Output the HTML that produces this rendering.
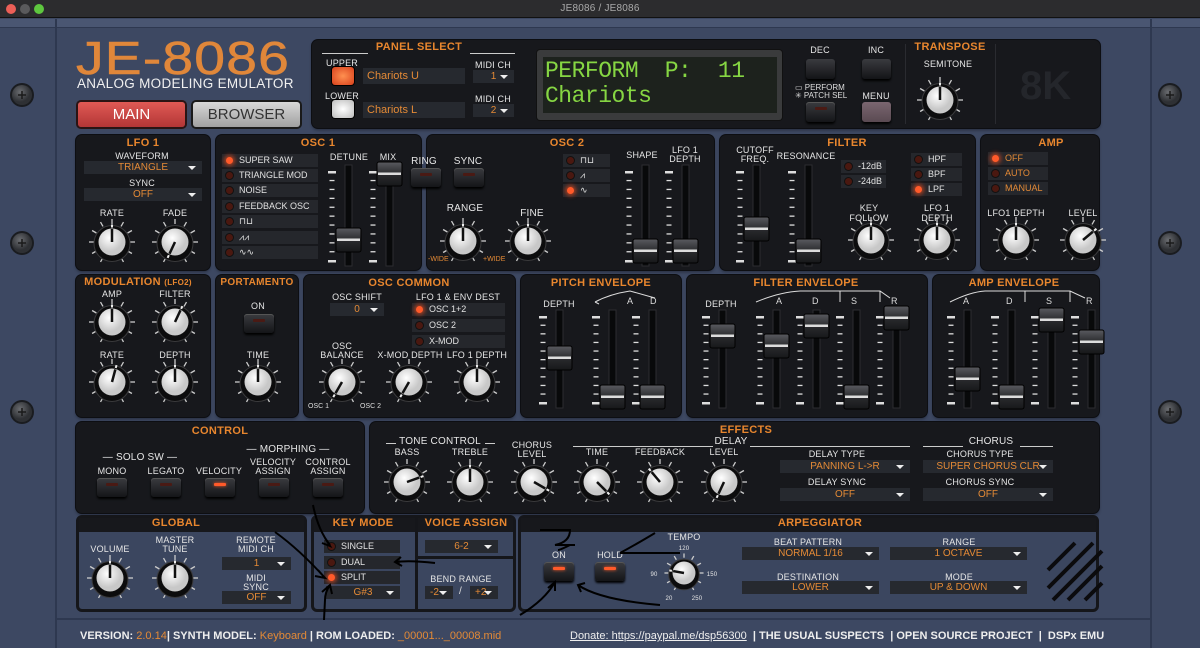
<!DOCTYPE html>
<html><head><meta charset="utf-8">
<style>
*{box-sizing:border-box;margin:0;padding:0}
body{width:1200px;height:648px;overflow:hidden;background:#3d4862;font-family:"Liberation Sans",sans-serif;position:relative;color:#ddd}
.a{position:absolute}
.t{position:absolute;transform:translateX(-50%);white-space:nowrap;text-align:center;font-size:9px;line-height:10px;color:#e6e6e6;letter-spacing:0.2px}
.h{position:absolute;transform:translateX(-50%);white-space:nowrap;font-size:11px;font-weight:bold;color:#e8862e;letter-spacing:0.3px}
.sec{position:absolute;background:#17181c;border-radius:6px;box-shadow:0 0 0 1px #0d0e12,0 2px 3px rgba(0,0,0,.4)}
.bsec{position:absolute;background:#3b465f;border:3px solid #15161a;border-radius:6px}
.dd{position:absolute;background:#26292f;height:13px;font-size:10px;line-height:13px;color:#e48a36;text-align:center}
.dd:after{content:"";position:absolute;right:6px;top:5px;border-left:4px solid transparent;border-right:4px solid transparent;border-top:4px solid #eee}
.led{position:absolute;background:#25272c;height:13px;font-size:9px;line-height:13px;color:#e2e2e2;padding-left:17px}
.led:before{content:"";position:absolute;left:4px;top:3px;width:7px;height:7px;border-radius:50%;background:#4a1810;box-shadow:0 0 0 1px #111}
.led.on:before{background:#ff5a2a;box-shadow:0 0 4px 2px rgba(255,80,30,.6)}
.led.o{color:#e48a36}
.btn{position:absolute;width:30px;height:19px;border-radius:3px;background:linear-gradient(#3a3b3f,#141518);box-shadow:0 2px 2px #000,inset 0 1px 0 #555}
.btn:after{content:"";position:absolute;left:9px;top:5px;width:12px;height:3px;background:#4a1a14;border-radius:1px}
.btn.on:after{background:#ff5a2a;box-shadow:0 0 3px #f52}
.ln{position:absolute;height:1px;background:#ccc}
</style></head><body>
<div class="a" style="left:0;top:0;width:1200px;height:18px;background:#2c2c2e;border-bottom:1px solid #111"></div>
<div class="a" style="left:6px;top:4px;width:10px;height:10px;border-radius:50%;background:#ec5f57"></div>
<div class="a" style="left:20px;top:4px;width:10px;height:10px;border-radius:50%;background:#5a5a5c"></div>
<div class="a" style="left:34px;top:4px;width:10px;height:10px;border-radius:50%;background:#5ec73f"></div>
<div class="t" style="left:600px;top:4px;color:#aaa;font-size:10px">JE8086 / JE8086</div>
<div class="a" style="left:0;top:19px;width:1200px;height:9px;background:#4a5672;border-bottom:1px solid #2e3850"></div>
<div class="a" style="left:55px;top:19px;width:2px;height:629px;background:#2e3850"></div>
<div class="a" style="left:1150px;top:19px;width:2px;height:629px;background:#2e3850"></div>
<div class="a" style="left:57px;top:618px;width:1093px;height:2px;background:#2e3850"></div>
<!-- logo -->
<div class="a" style="left:76px;top:31px;font-size:46px;color:#e0873a;letter-spacing:1px;transform:scaleX(1.2);transform-origin:left;-webkit-text-stroke:0.6px #e0873a">JE-8086</div>
<div class="a" style="left:77px;top:76px;font-size:13.5px;color:#f0f0f0;letter-spacing:0.3px">ANALOG MODELING EMULATOR</div>
<div class="a" style="left:78px;top:102px;width:107px;height:25px;border-radius:3px;background:linear-gradient(#e05a55,#b33636);box-shadow:0 0 0 2px #2a1414;color:#fff;font-size:15px;text-align:center;line-height:25px">MAIN</div>
<div class="a" style="left:193px;top:102px;width:107px;height:25px;border-radius:3px;background:linear-gradient(#d8d8d8,#a0a0a0);box-shadow:0 0 0 2px #1a1a1a;color:#333;font-size:15px;text-align:center;line-height:25px">BROWSER</div>
<!-- top panel -->
<div class="sec" style="left:312px;top:40px;width:788px;height:88px"></div>
<div class="ln" style="left:322px;top:53px;width:46px"></div><div class="ln" style="left:470px;top:53px;width:45px"></div>
<div class="h" style="left:419px;top:41px">PANEL SELECT</div>
<div class="t" style="left:342px;top:58px">UPPER</div>
<div class="a" style="left:332px;top:67px;width:22px;height:18px;border-radius:3px;background:radial-gradient(#ff9050,#d8401c);box-shadow:0 0 0 1px #000"></div>
<div class="a" style="left:363px;top:68px;width:102px;height:16px;background:#26292f;color:#e48a36;font-size:11px;line-height:16px;padding-left:4px">Chariots U</div>
<div class="t" style="left:493px;top:60px">MIDI CH</div>
<div class="dd" style="left:473px;top:70px;width:41px">1</div>
<div class="t" style="left:342px;top:91px">LOWER</div>
<div class="a" style="left:332px;top:100px;width:22px;height:18px;border-radius:3px;background:radial-gradient(#fff,#bbb);box-shadow:0 0 0 1px #000"></div>
<div class="a" style="left:363px;top:102px;width:102px;height:16px;background:#26292f;color:#e48a36;font-size:11px;line-height:16px;padding-left:4px">Chariots L</div>
<div class="t" style="left:493px;top:94px">MIDI CH</div>
<div class="dd" style="left:473px;top:104px;width:41px">2</div>
<div class="a" style="left:537px;top:50px;width:245px;height:70px;background:#3a3b3c;border-radius:3px;box-shadow:0 0 0 1px #111"></div>
<div class="a" style="left:543px;top:57px;width:234px;height:56px;background:#1d221d;color:#86d643;font-family:'Liberation Mono',monospace;font-size:23px;line-height:25px;padding:2px 0 0 2px;white-space:pre;letter-spacing:-0.5px">PERFORM  P:  11
Chariots</div>
<div class="t" style="left:820px;top:45px">DEC</div><div class="t" style="left:876px;top:45px">INC</div>
<div class="a" style="left:806px;top:59px;width:29px;height:20px;border-radius:3px;background:linear-gradient(#3a3b3f,#131417);box-shadow:0 2px 2px #000"></div>
<div class="a" style="left:862px;top:59px;width:29px;height:20px;border-radius:3px;background:linear-gradient(#3a3b3f,#131417);box-shadow:0 2px 2px #000"></div>
<div class="a" style="left:795px;top:84px;font-size:8px;line-height:8px;color:#ddd">▭ PERFORM<br>✳ PATCH SEL</div>
<div class="t" style="left:876px;top:91px">MENU</div>
<div class="btn" style="left:806px;top:102px;width:29px;height:20px"></div>
<div class="a" style="left:862px;top:102px;width:29px;height:20px;border-radius:3px;background:linear-gradient(#7a6670,#5a4a52);box-shadow:0 2px 2px #000"></div>
<div class="a" style="left:905px;top:44px;width:1px;height:80px;background:#2a2b30"></div>
<div class="a" style="left:995px;top:44px;width:1px;height:80px;background:#2a2b30"></div>
<div class="h" style="left:950px;top:41px">TRANSPOSE</div>
<div class="t" style="left:948px;top:59px">SEMITONE</div>
<div class="a" style="left:1020px;top:64px;font-size:40px;font-weight:bold;color:#24262b">8K</div>

<div class="sec" style="left:76px;top:135px;width:134px;height:135px"></div>
<div class="h" style="left:143px;top:137px">LFO 1</div>
<div class="t" style="left:142px;top:151px">WAVEFORM</div>
<div class="dd" style="left:84px;top:161px;width:118px">TRIANGLE</div>
<div class="t" style="left:142px;top:178px">SYNC</div>
<div class="dd" style="left:84px;top:188px;width:118px">OFF</div>
<div class="t" style="left:112px;top:208px">RATE</div><div class="t" style="left:175px;top:208px">FADE</div>

<div class="sec" style="left:216px;top:135px;width:205px;height:135px"></div>
<div class="h" style="left:318px;top:137px">OSC 1</div>
<div class="led on" style="left:222px;top:154px;width:96px">SUPER SAW</div>
<div class="led" style="left:222px;top:169px;width:96px">TRIANGLE MOD</div>
<div class="led" style="left:222px;top:184px;width:96px">NOISE</div>
<div class="led" style="left:222px;top:200px;width:96px">FEEDBACK OSC</div>
<div class="led" style="left:222px;top:215px;width:96px">⊓⊔</div>
<div class="led" style="left:222px;top:231px;width:96px">⩘⩘</div>
<div class="led" style="left:222px;top:246px;width:96px">∿∿</div>
<div class="t" style="left:349px;top:152px">DETUNE</div><div class="t" style="left:388px;top:152px">MIX</div>

<div class="sec" style="left:427px;top:135px;width:287px;height:135px"></div>
<div class="h" style="left:567px;top:137px">OSC 2</div>
<div class="t" style="left:424px;top:157px;font-size:10px">RING</div><div class="t" style="left:468px;top:157px;font-size:10px">SYNC</div>
<div class="btn" style="left:411px;top:168px"></div><div class="btn" style="left:454px;top:168px"></div>
<div class="led" style="left:563px;top:154px;width:47px">⊓⊔</div>
<div class="led" style="left:563px;top:169px;width:47px">⩘</div>
<div class="led on" style="left:563px;top:184px;width:47px">∿</div>
<div class="t" style="left:465px;top:204px;font-size:10px">RANGE</div>
<div class="t" style="left:532px;top:209px;font-size:10px">FINE</div>
<div class="t" style="left:642px;top:150px">SHAPE</div><div class="t" style="left:685px;top:146px;line-height:9px">LFO 1<br>DEPTH</div>
<div class="a" style="left:428px;top:256px;font-size:7px;color:#e48a36">-WIDE</div><div class="a" style="left:483px;top:256px;font-size:7px;color:#e48a36">+WIDE</div>

<div class="sec" style="left:720px;top:135px;width:255px;height:135px"></div>
<div class="h" style="left:847px;top:137px">FILTER</div>
<div class="t" style="left:755px;top:146px;line-height:9px">CUTOFF<br>FREQ.</div><div class="t" style="left:806px;top:151px">RESONANCE</div>
<div class="led" style="left:841px;top:160px;width:45px">-12dB</div>
<div class="led" style="left:841px;top:175px;width:45px">-24dB</div>
<div class="led" style="left:911px;top:153px;width:51px">HPF</div>
<div class="led" style="left:911px;top:168px;width:51px">BPF</div>
<div class="led on" style="left:911px;top:183px;width:51px">LPF</div>
<div class="t" style="left:869px;top:203px;line-height:10px">KEY<br>FOLLOW</div><div class="t" style="left:937px;top:203px;line-height:10px">LFO 1<br>DEPTH</div>

<div class="sec" style="left:981px;top:135px;width:118px;height:135px"></div>
<div class="h" style="left:1051px;top:137px">AMP</div>
<div class="led on o" style="left:988px;top:152px;width:60px">OFF</div>
<div class="led o" style="left:988px;top:167px;width:60px">AUTO</div>
<div class="led o" style="left:988px;top:182px;width:60px">MANUAL</div>
<div class="t" style="left:1016px;top:208px">LFO1 DEPTH</div><div class="t" style="left:1083px;top:208px">LEVEL</div>

<div class="sec" style="left:76px;top:275px;width:134px;height:142px"></div>
<div class="h" style="left:138px;top:276px">MODULATION <span style="font-size:8px">(LFO2)</span></div>
<div class="t" style="left:112px;top:289px">AMP</div><div class="t" style="left:175px;top:289px">FILTER</div>
<div class="t" style="left:112px;top:350px">RATE</div><div class="t" style="left:175px;top:350px">DEPTH</div>
<div class="sec" style="left:216px;top:275px;width:82px;height:142px"></div>
<div class="h" style="left:257px;top:277px;font-size:10px">PORTAMENTO</div>
<div class="t" style="left:258px;top:301px">ON</div>
<div class="btn" style="left:244px;top:314px"></div>
<div class="t" style="left:258px;top:350px">TIME</div>
<div class="sec" style="left:304px;top:275px;width:211px;height:142px"></div>
<div class="h" style="left:409px;top:277px">OSC COMMON</div>
<div class="t" style="left:357px;top:292px">OSC SHIFT</div>
<div class="dd" style="left:330px;top:303px;width:54px">0</div>
<div class="t" style="left:458px;top:292px">LFO 1 &amp; ENV DEST</div>
<div class="led on" style="left:412px;top:303px;width:93px">OSC 1+2</div>
<div class="led" style="left:412px;top:319px;width:93px">OSC 2</div>
<div class="led" style="left:412px;top:335px;width:93px">X-MOD</div>
<div class="t" style="left:342px;top:342px;line-height:9px">OSC<br>BALANCE</div>
<div class="t" style="left:410px;top:350px">X-MOD DEPTH</div><div class="t" style="left:477px;top:350px">LFO 1 DEPTH</div>
<div class="a" style="left:308px;top:403px;font-size:7px">OSC 1</div><div class="a" style="left:360px;top:403px;font-size:7px">OSC 2</div>

<div class="sec" style="left:521px;top:275px;width:160px;height:142px"></div>
<div class="h" style="left:601px;top:277px">PITCH ENVELOPE</div>
<div class="t" style="left:559px;top:299px">DEPTH</div>
<div class="sec" style="left:687px;top:275px;width:240px;height:142px"></div>
<div class="h" style="left:806px;top:277px">FILTER ENVELOPE</div>
<div class="t" style="left:721px;top:299px">DEPTH</div>
<div class="sec" style="left:933px;top:275px;width:166px;height:142px"></div>
<div class="h" style="left:1014px;top:277px">AMP ENVELOPE</div>

<div class="sec" style="left:76px;top:422px;width:288px;height:91px"></div>
<div class="h" style="left:220px;top:425px">CONTROL</div>
<div class="t" style="left:140px;top:453px;font-size:10px">— SOLO SW —</div>
<div class="t" style="left:288px;top:445px;font-size:10px">— MORPHING —</div>
<div class="t" style="left:112px;top:466px">MONO</div><div class="t" style="left:166px;top:466px">LEGATO</div><div class="t" style="left:219px;top:466px">VELOCITY</div>
<div class="t" style="left:273px;top:458px;line-height:9px">VELOCITY<br>ASSIGN</div><div class="t" style="left:328px;top:458px;line-height:9px">CONTROL<br>ASSIGN</div>
<div class="btn" style="left:97px;top:478px"></div><div class="btn" style="left:151px;top:478px"></div><div class="btn on" style="left:205px;top:478px"></div><div class="btn" style="left:259px;top:478px"></div><div class="btn" style="left:313px;top:478px"></div>

<div class="sec" style="left:370px;top:422px;width:729px;height:91px"></div>
<div class="h" style="left:746px;top:424px">EFFECTS</div>
<div class="ln" style="left:386px;top:443px;width:10px"></div><div class="ln" style="left:485px;top:443px;width:10px"></div>
<div class="t" style="left:440px;top:437px;font-size:10px">TONE CONTROL</div>
<div class="t" style="left:407px;top:447px">BASS</div><div class="t" style="left:470px;top:447px">TREBLE</div>
<div class="t" style="left:532px;top:441px;line-height:9px">CHORUS<br>LEVEL</div>
<div class="ln" style="left:573px;top:446px;width:140px"></div><div class="ln" style="left:750px;top:446px;width:160px"></div>
<div class="t" style="left:731px;top:437px;font-size:10px">DELAY</div>
<div class="t" style="left:597px;top:447px">TIME</div><div class="t" style="left:660px;top:447px">FEEDBACK</div><div class="t" style="left:724px;top:447px">LEVEL</div>
<div class="t" style="left:837px;top:449px">DELAY TYPE</div>
<div class="dd" style="left:780px;top:460px;width:130px">PANNING L-&gt;R</div>
<div class="t" style="left:837px;top:477px">DELAY SYNC</div>
<div class="dd" style="left:780px;top:488px;width:130px">OFF</div>
<div class="ln" style="left:923px;top:446px;width:40px"></div><div class="ln" style="left:1020px;top:446px;width:33px"></div>
<div class="t" style="left:991px;top:437px;font-size:10px">CHORUS</div>
<div class="t" style="left:980px;top:449px">CHORUS TYPE</div>
<div class="dd" style="left:923px;top:460px;width:130px">SUPER CHORUS CLR</div>
<div class="t" style="left:980px;top:477px">CHORUS SYNC</div>
<div class="dd" style="left:923px;top:488px;width:130px">OFF</div>

<div class="bsec" style="left:76px;top:515px;width:231px;height:97px"></div>
<div class="a" style="left:79px;top:518px;width:225px;height:14px;background:#17181c"></div>
<div class="h" style="left:176px;top:517px">GLOBAL</div>
<div class="t" style="left:110px;top:544px">VOLUME</div>
<div class="t" style="left:175px;top:536px;line-height:9px">MASTER<br>TUNE</div>
<div class="t" style="left:256px;top:536px;line-height:9px">REMOTE<br>MIDI CH</div>
<div class="dd" style="left:222px;top:557px;width:69px">1</div>
<div class="t" style="left:256px;top:574px;line-height:9px">MIDI<br>SYNC</div>
<div class="dd" style="left:222px;top:591px;width:69px">OFF</div>
<div class="bsec" style="left:311px;top:515px;width:205px;height:97px"></div>
<div class="a" style="left:314px;top:518px;width:199px;height:14px;background:#17181c"></div>
<div class="a" style="left:415px;top:518px;width:3px;height:91px;background:#15161a"></div>
<div class="a" style="left:418px;top:556px;width:95px;height:3px;background:#15161a"></div>
<div class="h" style="left:363px;top:517px">KEY MODE</div>
<div class="h" style="left:466px;top:517px">VOICE ASSIGN</div>
<div class="led" style="left:324px;top:540px;width:76px">SINGLE</div>
<div class="led" style="left:324px;top:556px;width:76px">DUAL</div>
<div class="led on" style="left:324px;top:571px;width:76px">SPLIT</div>
<div class="dd" style="left:326px;top:586px;width:74px">G#3</div>
<div class="dd" style="left:425px;top:540px;width:73px">6-2</div>
<div class="t" style="left:461px;top:574px">BEND RANGE</div>
<div class="dd" style="left:425px;top:586px;width:28px;text-align:left;padding-left:5px">-2</div>
<div class="a" style="left:459px;top:586px;font-size:10px">/</div>
<div class="dd" style="left:470px;top:586px;width:28px;text-align:left;padding-left:5px">+2</div>
<div class="bsec" style="left:518px;top:515px;width:581px;height:97px"></div>
<div class="a" style="left:521px;top:518px;width:575px;height:14px;background:#17181c"></div>
<div class="h" style="left:820px;top:517px">ARPEGGIATOR</div>
<div class="t" style="left:559px;top:550px">ON</div><div class="t" style="left:610px;top:550px">HOLD</div>
<div class="btn on" style="left:544px;top:562px"></div><div class="btn on" style="left:595px;top:562px"></div>
<div class="t" style="left:684px;top:532px">TEMPO</div>
<div class="t" style="left:684px;top:544px;font-size:6px">120</div>
<div class="t" style="left:654px;top:570px;font-size:6px">90</div><div class="t" style="left:712px;top:570px;font-size:6px">150</div>
<div class="t" style="left:669px;top:594px;font-size:6px">20</div><div class="t" style="left:697px;top:594px;font-size:6px">250</div>
<div class="t" style="left:808px;top:537px">BEAT PATTERN</div>
<div class="dd" style="left:742px;top:547px;width:137px">NORMAL 1/16</div>
<div class="t" style="left:959px;top:537px">RANGE</div>
<div class="dd" style="left:890px;top:547px;width:137px">1 OCTAVE</div>
<div class="t" style="left:808px;top:572px">DESTINATION</div>
<div class="dd" style="left:742px;top:581px;width:137px">LOWER</div>
<div class="t" style="left:959px;top:572px">MODE</div>
<div class="dd" style="left:890px;top:581px;width:137px">UP &amp; DOWN</div>

<div class="a" style="left:80px;top:630px;font-size:11px;font-weight:bold;color:#eee;white-space:nowrap">VERSION: <span style="color:#e48a36;font-weight:normal">2.0.14</span>| SYNTH MODEL: <span style="color:#e48a36;font-weight:normal">Keyboard</span> | ROM LOADED: <span style="color:#e48a36;font-weight:normal">_00001..._00008.mid</span></div>
<div class="a" style="left:570px;top:630px;font-size:11px;color:#eee;white-space:nowrap"><span style="text-decoration:underline">Donate: https://paypal.me/dsp56300</span> <b>&nbsp;| THE USUAL SUSPECTS &nbsp;| OPEN SOURCE PROJECT &nbsp;| &nbsp;DSPx EMU</b></div>

<svg class="a" style="left:0;top:0" width="1200" height="648" id="s"></svg>
<script>
var s=document.getElementById('s'),o='';
function P(a,r,cx,cy){var t=(a-90)*Math.PI/180;return [cx+r*Math.cos(t),cy+r*Math.sin(t)];}
function knob(cx,cy,a,k){k=k||1;for(var i=0;i<=10;i++){var an=-150+i*30,p1=P(an,18*k,cx,cy),p2=P(an,23*k,cx,cy);o+='<line x1="'+p1[0]+'" y1="'+p1[1]+'" x2="'+p2[0]+'" y2="'+p2[1]+'" stroke="#ccc" stroke-width="1.3"/>';}
o+='<circle cx="'+cx+'" cy="'+(cy+1.5)+'" r="'+18*k+'" fill="#0c0c0d" stroke="#3a3a3c"/>';
o+='<circle cx="'+cx+'" cy="'+cy+'" r="'+13.5*k+'" fill="url(#kg)"/>';
var e=P(a,13*k,cx,cy),m1=P(a,14.5*k,cx,cy),m2=P(a,17.5*k,cx,cy);
o+='<line x1="'+cx+'" y1="'+cy+'" x2="'+e[0]+'" y2="'+e[1]+'" stroke="#111" stroke-width="2.5"/>';
o+='<line x1="'+m1[0]+'" y1="'+m1[1]+'" x2="'+m2[0]+'" y2="'+m2[1]+'" stroke="#eee" stroke-width="2"/>';}
function fader(x,t,b,c){o+='<rect x="'+(x-3)+'" y="'+t+'" width="7" height="'+(b-t)+'" fill="#08090a" stroke="#2c2d31"/>';
for(var i=0;i<=10;i++){var y=t+6+i*(b-t-12)/10,w=(i==0||i==10)?8:5;o+='<rect x="'+(x-20-w/2+4)+'" y="'+y+'" width="'+w+'" height="'+(w==8?2.5:1.3)+'" fill="#ddd"/>';}
o+='<rect x="'+(x-12)+'" y="'+(c-12)+'" width="25" height="24" rx="2" fill="url(#fg)" stroke="#000"/><rect x="'+(x-11)+'" y="'+(c-1.5)+'" width="23" height="2.5" fill="#ddd"/>';}
function screw(x,y){o+='<circle cx="'+x+'" cy="'+y+'" r="12" fill="#1a1c20"/><circle cx="'+x+'" cy="'+y+'" r="10" fill="url(#sg)"/><path d="M'+(x-4)+' '+y+'h8M'+x+' '+(y-4)+'v8" stroke="#1a1a1a" stroke-width="1.5"/>';}
o+='<defs><radialGradient id="kg" cx="40%" cy="35%"><stop offset="0" stop-color="#fff"/><stop offset="1" stop-color="#c8c8c8"/></radialGradient><linearGradient id="fg" x1="0" y1="0" x2="0" y2="1"><stop offset="0" stop-color="#5a5b60"/><stop offset=".5" stop-color="#2a2b2e"/><stop offset="1" stop-color="#17181a"/></linearGradient><radialGradient id="sg" cx="40%" cy="35%"><stop offset="0" stop-color="#6a6c70"/><stop offset="1" stop-color="#2e3034"/></radialGradient></defs>';
[[22,95],[22,243],[22,412],[1170,95],[1170,243],[1170,412]].forEach(function(p){screw(p[0],p[1]);});
[[112,242,0],[175,242,-155],[463,241,0],[528,241,0],[871,240,0],[937,240,0],[1016,240,0],[1083,240,50],[940,100,0],[112,322,0],[175,322,25],[112,382,15],[175,382,0],[258,382,0],[342,382,-150],[409,382,-150],[477,382,0],[407,482,70],[470,482,0],[534,482,120],[597,482,135],[660,482,-40],[724,482,-155],[110,578,0],[175,578,0]].forEach(function(k){knob(k[0],k[1],k[2]);});
knob(684,573,-80,0.85);
fader(348,165,266,240);fader(389,165,266,174);fader(645,165,266,251);fader(685,165,266,251);fader(756,165,266,229);fader(808,165,266,251);
fader(559,310,408,358);fader(612,310,408,397);fader(652,310,408,397);
fader(722,310,408,336);fader(776,310,408,346);fader(816,310,408,326);fader(856,310,408,397);fader(896,310,408,318);
fader(967,310,408,379);fader(1011,310,408,397);fader(1051,310,408,320);fader(1091,310,408,342);
o+='<path d="M595 302 Q610 294 630 291 L655 298 M595 302 l4 -2 m-4 2 l4 2" stroke="#ddd" fill="none"/><path d="M756 302 Q780 292 800 291 L880 291 L890 298 M840 291 L840 302 M880 291 L880 302" stroke="#ddd" fill="none"/><path d="M950 302 Q970 292 985 291 L1070 291 L1085 298 M1025 291 L1025 302 M1070 291 L1070 302" stroke="#ddd" fill="none"/>';
o+='<text x="627" y="304" fill="#ddd" font-size="9" font-family="Liberation Sans">A</text><text x="650" y="304" fill="#ddd" font-size="9" font-family="Liberation Sans">D</text>';
o+='<text x="776" y="304" fill="#ddd" font-size="9" font-family="Liberation Sans">A</text><text x="812" y="304" fill="#ddd" font-size="9" font-family="Liberation Sans">D</text><text x="851" y="304" fill="#ddd" font-size="9" font-family="Liberation Sans">S</text><text x="891" y="304" fill="#ddd" font-size="9" font-family="Liberation Sans">R</text>';
o+='<text x="963" y="304" fill="#ddd" font-size="9" font-family="Liberation Sans">A</text><text x="1006" y="304" fill="#ddd" font-size="9" font-family="Liberation Sans">D</text><text x="1046" y="304" fill="#ddd" font-size="9" font-family="Liberation Sans">S</text><text x="1086" y="304" fill="#ddd" font-size="9" font-family="Liberation Sans">R</text>';
o+='<g stroke="#0b0b0d" stroke-width="4"><line x1="1048" y1="570" x2="1075" y2="543"/><line x1="1048" y1="588" x2="1093" y2="543"/><line x1="1053" y1="600" x2="1102" y2="551"/><line x1="1068" y1="600" x2="1102" y2="566"/><line x1="1085" y1="600" x2="1102" y2="583"/></g>';
o+='<g stroke="#000" stroke-width="2" fill="none"><path d="M313 505 Q318 530 330 545 M325 538 l5 8 l-8 -3"/><path d="M275 532 Q300 550 325 578 M318 570 l7 8 l-10 -2"/><path d="M435 563 Q410 560 395 562 M401 557 l-6 5 l7 4"/><path d="M324 620 L325 600 Q325 592 330 585 M322 592 l8 -7 l2 9"/><path d="M540 530 H570 Q570 542 555 545 H575 M570 545 Q560 550 558 550"/><path d="M655 533 Q635 545 620 553 M620 553 H680"/><path d="M520 615 Q545 600 555 582 M548 588 l7 -6 l0 9"/><path d="M660 605 Q600 600 578 585 M585 583 l-7 2 l3 7"/></g>';
s.innerHTML=o;
</script>
</body></html>
